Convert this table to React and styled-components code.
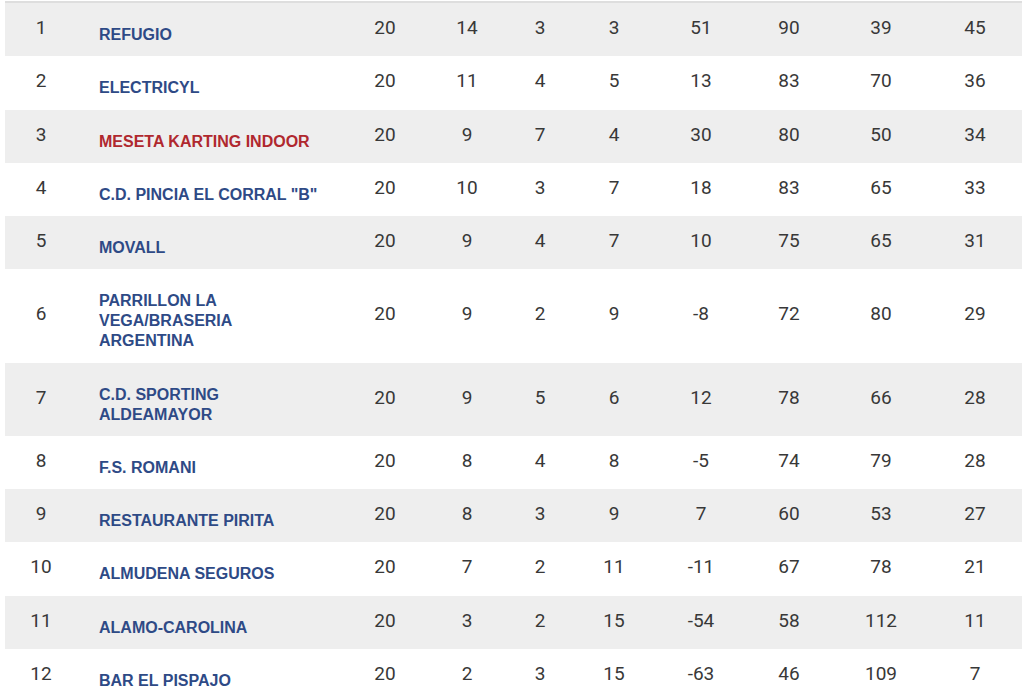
import styled, { createGlobalStyle } from "styled-components";

const GlobalStyle = createGlobalStyle`
  html, body {
    margin: 0;
    padding: 0;
    overflow: hidden;
    background: #fff;
  }
`;

const standings = [
  { pos: 1, name: "REFUGIO", stats: [20, 14, 3, 3, 51, 90, 39, 45] },
  { pos: 2, name: "ELECTRICYL", stats: [20, 11, 4, 5, 13, 83, 70, 36] },
  { pos: 3, name: "MESETA KARTING INDOOR", stats: [20, 9, 7, 4, 30, 80, 50, 34], highlight: true },
  { pos: 4, name: 'C.D. PINCIA EL CORRAL "B"', stats: [20, 10, 3, 7, 18, 83, 65, 33] },
  { pos: 5, name: "MOVALL", stats: [20, 9, 4, 7, 10, 75, 65, 31] },
  { pos: 6, name: "PARRILLON LA VEGA/BRASERIA ARGENTINA", stats: [20, 9, 2, 9, -8, 72, 80, 29] },
  { pos: 7, name: "C.D. SPORTING ALDEAMAYOR", stats: [20, 9, 5, 6, 12, 78, 66, 28] },
  { pos: 8, name: "F.S. ROMANI", stats: [20, 8, 4, 8, -5, 74, 79, 28] },
  { pos: 9, name: "RESTAURANTE PIRITA", stats: [20, 8, 3, 9, 7, 60, 53, 27] },
  { pos: 10, name: "ALMUDENA SEGUROS", stats: [20, 7, 2, 11, -11, 67, 78, 21] },
  { pos: 11, name: "ALAMO-CAROLINA", stats: [20, 3, 2, 15, -54, 58, 112, 11] },
  { pos: 12, name: "BAR EL PISPAJO", stats: [20, 2, 3, 15, -63, 46, 109, 7] },
];

const Table = styled.div`
  margin: 1px 0 0 5px;
  border-top: 2px solid #dedede;
  display: flex;
  flex-direction: column;
`;

const Row = styled.div`
  display: grid;
  grid-template-columns: 85px 256px 78px 86px 60px 88px 86px 90px 94px 94px;
  background: ${(props) => (props.$striped ? "#eeeeee" : "#ffffff")};
`;

const NumCell = styled.div`
  display: flex;
  align-items: center;
  justify-content: center;
  padding: 0 ${(props) => (props.$pos ? "13px" : "0")} 4px 0;
  font-family: Roboto, "Liberation Sans", sans-serif;
  font-size: 19px;
  color: #383838;
`;

const NameCell = styled.div`
  display: flex;
  align-items: center;
  padding: 22px 19px 11.25px 9px;
`;

const TeamName = styled.a`
  font-family: "Liberation Sans", Arial, sans-serif;
  font-weight: bold;
  font-size: 16px;
  line-height: 20px;
  color: ${(props) => (props.$highlight ? "#b0282e" : "#2e4a86")};
  text-decoration: none;
`;

export default function App() {
  return (
    <>
      <GlobalStyle />
      <Table>
        {standings.map((team, i) => (
          <Row key={team.pos} $striped={i % 2 === 0}>
            <NumCell $pos>{team.pos}</NumCell>
            <NameCell>
              <TeamName href="#" $highlight={team.highlight}>
                {team.name}
              </TeamName>
            </NameCell>
            {team.stats.map((value, j) => (
              <NumCell key={j}>{value}</NumCell>
            ))}
          </Row>
        ))}
      </Table>
    </>
  );
}
